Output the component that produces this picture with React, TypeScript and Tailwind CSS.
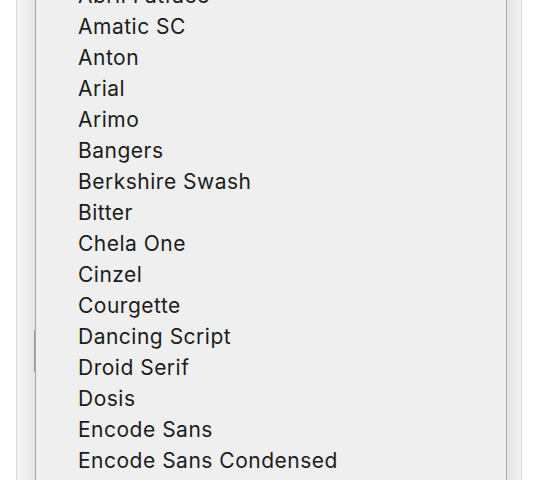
const FONTS = [
  'Abril Fatface',
  'Amatic SC',
  'Anton',
  'Arial',
  'Arimo',
  'Bangers',
  'Berkshire Swash',
  'Bitter',
  'Chela One',
  'Cinzel',
  'Courgette',
  'Dancing Script',
  'Droid Serif',
  'Dosis',
  'Encode Sans',
  'Encode Sans Condensed',
];

export default function App() {
  return (
    <div className="w-[538px] h-[480px] overflow-hidden bg-white flex font-['Inter',sans-serif]">
      {/* page behind, left side */}
      <div className="w-[16px] shrink-0 bg-white" />
      <div className="w-[1px] shrink-0 bg-[#d6d6d6]" />
      <div className="w-[18px] shrink-0 bg-gradient-to-r from-[#f6f6f6] to-[#e6e6e6] flex flex-col">
        <div className="h-[330px]" />
        <div className="h-[42px] border-r border-[#9a9a9a]" />
      </div>

      {/* dropdown list */}
      <div className="w-[472px] shrink-0 h-full overflow-hidden bg-[#efefef] border-l border-r border-[#a8a8a8]">
        <ul className="-mt-[20px] pl-[42px]">
          {FONTS.map((f) => (
            <li
              key={f}
              className="h-[31px] flex items-center text-[21px] leading-none text-[#1c1c1c] tracking-[0.5px]"
            >
              {f}
            </li>
          ))}
        </ul>
      </div>

      {/* page behind, right side */}
      <div className="w-[14px] shrink-0 bg-gradient-to-r from-[#e4e4e4] to-[#f2f2f2]" />
      <div className="w-[1px] shrink-0 bg-[#dadada]" />
      <div className="flex-1 bg-white" />
    </div>
  );
}
